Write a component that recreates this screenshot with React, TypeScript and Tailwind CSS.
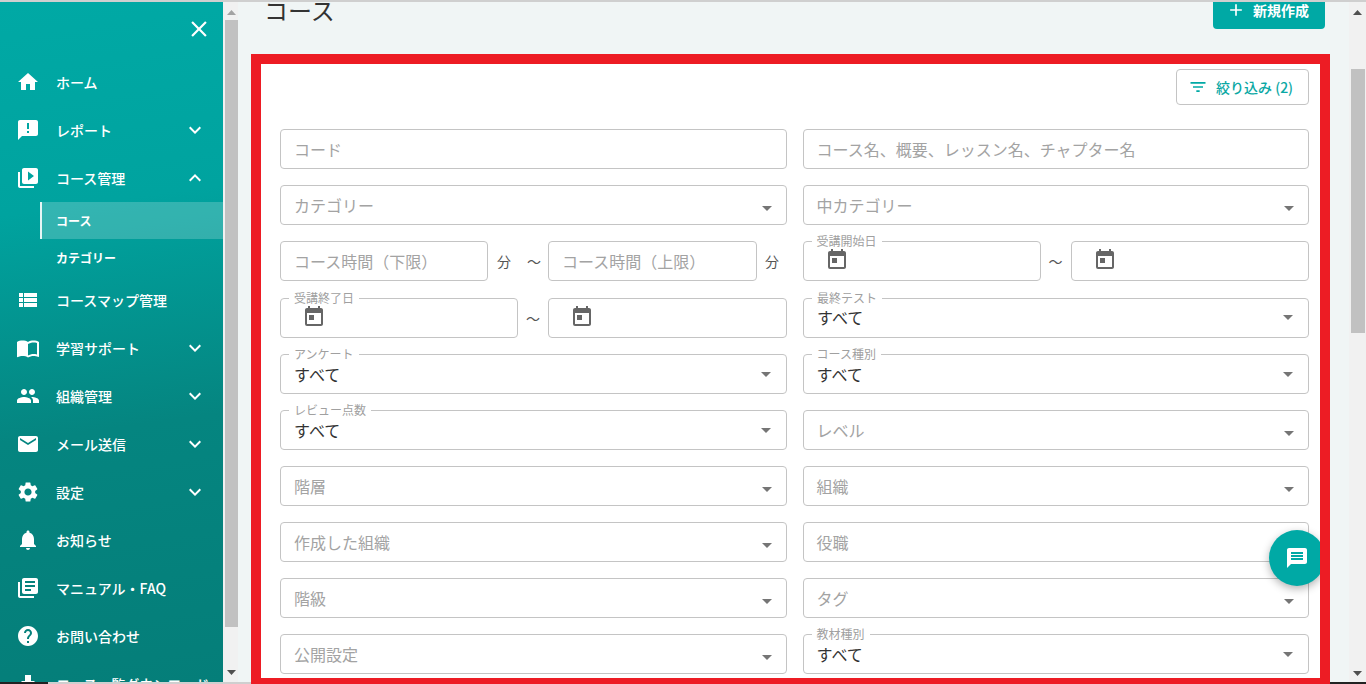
import React from "react";
import {
  MdHome, MdAnnouncement, MdVideoLibrary, MdViewList, MdImportContacts, MdPeople, MdEmail, MdSettings,
  MdNotifications, MdLibraryBooks, MdHelp, MdGetApp, MdExpandMore, MdExpandLess, MdClose, MdAdd,
  MdFilterList, MdToday, MdMessage,
} from "react-icons/md";

const Caret = ({ filled, up }: { filled?: boolean; up?: boolean }) => (
  <svg width="10" height="5" viewBox="0 0 10 5" className={up ? "absolute right-[15px] top-[16px]" : filled ? "absolute right-[15px] top-[17px]" : "absolute right-[14px] top-[20px]"}>
    <path d="M0 0l5 5 5-5z" fill="#757575" />
  </svg>
);

const Field = ({ children, label, className = "" }: { children?: React.ReactNode; label?: string; className?: string }) => (
  <div className={`relative h-10 rounded border border-[#c4c4c4] bg-white ${className}`}>
    {label && (
      <span className="absolute left-[8px] top-[-8px] bg-white px-[5px] text-[12px] leading-[14px] text-[#a0a0a0]">{label}</span>
    )}
    {children}
  </div>
);

const Ph = ({ t, caret }: { t: string; caret?: boolean }) => (
  <Field className="flex-1">
    <div className="flex h-full items-center pl-[13px] text-[16px] text-[#a3a3a3]">{t}</div>
    {caret && <Caret />}
  </Field>
);

const Sel = ({ label, v = "すべて", up }: { label: string; v?: string; up?: boolean }) => (
  <Field label={label} className="flex-1">
    <div className={`flex h-full items-center pl-[13px] text-[16px] text-[#333333] ${up ? "pb-[2px]" : ""}`}>{v}</div>
    <Caret filled up={up} />
  </Field>
);

const DateF = ({ label, className = "" }: { label?: string; className?: string }) => (
  <Field label={label} className={className}>
    <div className="flex h-full items-center pb-[2px] pl-[21px]">
      <MdToday size={24} color="#666666" />
    </div>
  </Field>
);

const Tilde = ({ className = "" }: { className?: string }) => (
  <span className={`text-center text-[14px] text-[#555555] ${className}`}>～</span>
);

const Row = ({ children, className = "" }: { children: React.ReactNode; className?: string }) => (
  <div className={`flex gap-4 ${className}`}>{children}</div>
);

const NavItem = ({ icon: I, label, chev }: { icon: any; label: string; chev?: "up" | "down" }) => (
  <div className="flex h-12 shrink-0 items-center pl-4 pr-4 text-white">
    <I size={24} color="#ffffff" className="shrink-0" />
    <span className="ml-4 flex-1 whitespace-nowrap text-[14px] font-medium">{label}</span>
    {chev === "down" && <MdExpandMore size={24} color="#ffffff" />}
    {chev === "up" && <MdExpandLess size={24} color="#ffffff" />}
  </div>
);

const Tri = ({ up, light }: { up?: boolean; light?: boolean }) => (
  <svg width="9" height="5" viewBox="0 0 9 5">
    <path d={up ? "M0 5l4.5-5 4.5 5z" : "M0 0l4.5 5 4.5-5z"} fill={light ? "#a3a3a3" : "#505050"} />
  </svg>
);

export default function App() {
  return (
    <div className="relative flex h-[684px] w-[1366px] flex-col overflow-hidden bg-white font-['Noto_Sans_CJK_JP','Noto_Sans',sans-serif]">
      <div className="h-[2px] shrink-0 bg-[#cfcfcf]" />
      <div className="flex min-h-0 flex-1">
        {/* sidebar */}
        <aside className="flex w-[223px] shrink-0 flex-col overflow-hidden bg-[linear-gradient(172deg,#00a9a5_0%,#00a39f_30%,#058580_62%,#057e79_100%)]">
          <div className="flex h-[56px] shrink-0 items-center justify-end pb-[2px] pr-[12px]">
            <MdClose size={24} color="#ffffff" className="scale-110" />
          </div>
          <NavItem icon={MdHome} label="ホーム" />
          <NavItem icon={MdAnnouncement} label="レポート" chev="down" />
          <NavItem icon={MdVideoLibrary} label="コース管理" chev="up" />
          <div className="ml-10 flex h-[37px] shrink-0 items-center border-l-2 border-[#e6f6f5] bg-white/20 pl-[14px] text-[12px] font-bold text-white">コース</div>
          <div className="flex h-[37px] shrink-0 items-center pl-[56px] text-[12px] font-bold text-white">カテゴリー</div>
          <NavItem icon={MdViewList} label="コースマップ管理" />
          <NavItem icon={MdImportContacts} label="学習サポート" chev="down" />
          <NavItem icon={MdPeople} label="組織管理" chev="down" />
          <NavItem icon={MdEmail} label="メール送信" chev="down" />
          <NavItem icon={MdSettings} label="設定" chev="down" />
          <NavItem icon={MdNotifications} label="お知らせ" />
          <NavItem icon={MdLibraryBooks} label="マニュアル・FAQ" />
          <NavItem icon={MdHelp} label="お問い合わせ" />
          <NavItem icon={MdGetApp} label="コース一覧ダウンロード" />
        </aside>

        {/* sidebar scrollbar */}
        <div className="flex w-[15px] shrink-0 flex-col bg-[#f1f1f1]">
          <div className="flex h-[18px] shrink-0 items-center justify-center pl-[2px] pt-[2px]"><Tri up light /></div>
          <div className="ml-[2px] h-[607px] shrink-0 bg-[#c1c1c1]" />
          <div className="flex flex-1 items-end justify-center pb-[9px] pl-[2px]"><Tri /></div>
        </div>

        {/* main */}
        <main className="flex min-w-0 flex-1 flex-col bg-[#f0f5f5]">
          <div className="flex h-[52px] shrink-0 items-start justify-between pl-[26px] pr-[24px]">
            <h1 className="mt-[-10px] text-[24px] font-normal leading-[36px] text-[#333333]">コース</h1>
            <button className="flex h-[27px] w-[112px] items-center rounded-b bg-[#00a9a5] pb-[11px] pl-[13px] text-[14px] font-bold text-white">
              <MdAdd size={20} color="#ffffff" />
              <span className="ml-[7px]">新規作成</span>
            </button>
          </div>
          <section className="ml-[13px] mr-[19px] h-[630px] shrink-0 border-x-10 border-t-10 border-b-[6px] border-[#ed1c24] bg-white">
            <div className="relative h-full overflow-hidden pl-[19px] pr-[11px] pt-[5px]">
              <div className="flex justify-end">
                <button className="flex h-9 w-[133px] items-center rounded border border-[#c4c4c4] bg-white pl-[11px] text-[14px] font-medium text-[#0ba8a4]">
                  <MdFilterList size={20} color="#00a9a5" />
                  <span className="ml-[8px]">絞り込み (2)</span>
                </button>
              </div>
              <div className="mt-[24px] flex flex-col gap-4">
                <Row><Ph t="コード" /><Ph t="コース名、概要、レッスン名、チャプター名" /></Row>
                <Row><Ph t="カテゴリー" caret /><Ph t="中カテゴリー" caret /></Row>
                <Row>
                  <div className="flex flex-1 items-center">
                    <div className="flex w-[208px]"><Ph t="コース時間（下限）" /></div>
                    <span className="ml-[9px] w-[13px] text-[14px] leading-none text-[#555555]">分</span>
                    <Tilde className="ml-[17px] w-[14px]" />
                    <div className="ml-[7px] flex w-[209px]"><Ph t="コース時間（上限）" /></div>
                    <span className="ml-[8px] w-[13px] text-[14px] leading-none text-[#555555]">分</span>
                  </div>
                  <div className="flex flex-1 items-center">
                    <DateF label="受講開始日" className="w-[238px]" />
                    <Tilde className="w-[30px]" />
                    <DateF className="w-[238px]" />
                  </div>
                </Row>
                <Row className="mt-px">
                  <div className="flex flex-1 items-center">
                    <DateF label="受講終了日" className="w-[238px]" />
                    <Tilde className="w-[30px]" />
                    <DateF className="w-[239px]" />
                  </div>
                  <Sel label="最終テスト" up />
                </Row>
                <Row><Sel label="アンケート" /><Sel label="コース種別" /></Row>
                <Row><Sel label="レビュー点数" /><Ph t="レベル" caret /></Row>
                <Row><Ph t="階層" caret /><Ph t="組織" caret /></Row>
                <Row><Ph t="作成した組織" caret /><Ph t="役職" caret /></Row>
                <Row><Ph t="階級" caret /><Ph t="タグ" caret /></Row>
                <Row><Ph t="公開設定" caret /><Sel label="教材種別" /></Row>
              </div>
              {/* floating chat button */}
              <button className="absolute right-[-5px] top-[466px] flex h-14 w-14 items-center justify-center rounded-full bg-[#00a9a5] shadow-[0_3px_8px_rgba(0,0,0,0.3)]">
                <MdMessage size={24} color="#ffffff" />
              </button>
            </div>
          </section>
        </main>

        {/* main scrollbar */}
        <div className="flex w-[17px] shrink-0 flex-col bg-[#f1f1f1]">
          <div className="flex h-[20px] shrink-0 items-center justify-center"><Tri up /></div>
          <div className="ml-[2px] mr-px mt-[47px] h-[264px] shrink-0 bg-[#c1c1c1]" />
          <div className="flex flex-1 items-end justify-center pb-[8px]"><Tri /></div>
        </div>
      </div>

      {/* window edge overlapping the page at the bottom */}
      <div className="absolute bottom-0 left-0 flex h-[2px] w-[251px]">
        <div className="w-12 bg-[#222222]" />
        <div className="flex-1 bg-[#cfcfcf]" />
      </div>
      <div className="absolute bottom-0 right-0 h-[2px] w-9 bg-[#222222]" />
    </div>
  );
}
